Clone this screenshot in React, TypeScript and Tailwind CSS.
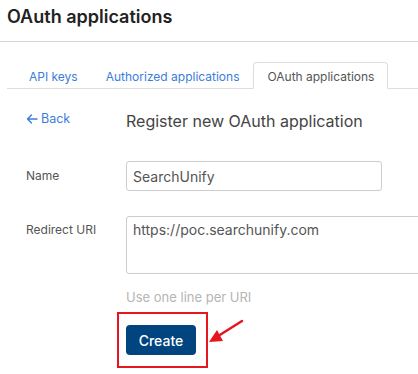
import React from 'react';

const TABS = ['API keys', 'Authorized applications', 'OAuth applications'];

export default function App() {
  const active = 2;

  return (
    <div className="relative w-[418px] h-[374px] overflow-hidden bg-white font-['Inter',sans-serif] text-[#555]">
      {/* Page title */}
      <div className="h-[42px] border-b border-[#d4d4d4] pl-[7px] pt-[4px]">
        <h1 className="text-[18px] font-semibold leading-[26px] text-[#222]">OAuth applications</h1>
      </div>

      {/* Tabs */}
      <div className="ml-[7px] mt-[20px] flex border-b border-[#ddd] pl-[8px]">
        {TABS.map((tab, i) => (
          <div
            key={tab}
            className={
              i === active
                ? '-mb-px h-[27px] rounded-t-[4px] border border-[#ddd] border-b-white bg-white px-[13px] text-[12px] leading-[27px] text-[#555]'
                : 'h-[26px] border border-transparent px-[13px] text-[12px] leading-[27px] text-[#3b7dd8]'
            }
          >
            {tab}
          </div>
        ))}
      </div>

      {/* Form */}
      <div className="pt-[19px]">
        <div className="flex items-start">
          <div className="flex w-[126px] shrink-0 items-center gap-[3px] pl-[26px] pt-[1px] text-[12.5px] leading-[20px] text-[#3b7dd8]">
            <svg width="12" height="12" viewBox="0 0 12 12" fill="none" stroke="currentColor" strokeWidth="1.4" strokeLinecap="round" strokeLinejoin="round">
              <path d="M11 6H1.5M5.5 2L1.5 6l4 4" />
            </svg>
            Back
          </div>
          <h2 className="pt-[2px] text-[16px] leading-[22px] text-[#444]">Register new OAuth application</h2>
        </div>

        <div className="mt-[29px] flex items-center">
          <label className="w-[126px] shrink-0 pl-[26px] text-[12px] text-[#555]">Name</label>
          <div className="flex h-[30px] w-[256px] items-center rounded-[3px] border border-[#ccc] px-[6px] text-[14px] text-[#555]">
            SearchUnify
          </div>
        </div>

        <div className="mt-[25px] flex items-start">
          <label className="w-[126px] shrink-0 pl-[26px] pt-[4px] text-[12px] leading-[20px] text-[#555]">Redirect URI</label>
          <div className="h-[58px] w-[330px] shrink-0 rounded-[3px] border border-[#ccc] px-[6px] pt-[3px] text-[14px] leading-[20px] text-[#555]">
            https://poc.searchunify.com
          </div>
        </div>

        <div className="mt-[14px] pl-[126px] text-[13px] leading-[18px] text-[#b5b5b5]">Use one line per URI</div>

        <div className="ml-[117px] mt-[6px] w-[91px] border-2 border-[#e5161f] pb-[11px] pl-[7px] pt-[11px]">
          <button className="h-[30px] w-[70px] rounded-[4px] bg-[#004480] text-[14px] font-medium text-white">
            Create
          </button>
        </div>
      </div>

      {/* Annotation arrow */}
      <svg className="absolute left-[205px] top-[316px]" width="44" height="32" viewBox="0 0 44 32">
        <line x1="37" y1="5" x2="10" y2="22" stroke="#e5161f" strokeWidth="2.5" strokeLinecap="round" />
        <polygon points="4,26 12,14 18,25" fill="#e5161f" />
      </svg>
    </div>
  );
}
